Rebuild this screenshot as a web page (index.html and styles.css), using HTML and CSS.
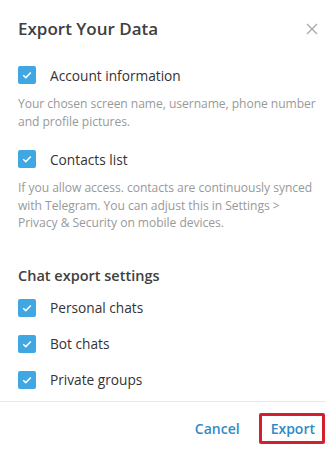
FILE: index.html
```html
<!DOCTYPE html>
<html>
<head>
<meta charset="utf-8">
<link rel="stylesheet" href="styles.css">
</head>
<body>
<div class="dialog">
  <div class="header">
    <div class="title">Export Your Data</div>
    <svg class="close" width="12" height="12" viewBox="0 0 12 12"><path d="M1 1L11 11M11 1L1 11" stroke="#a8a8a8" stroke-width="1.3" fill="none"/></svg>
  </div>
  <div class="content">
    <div class="option">
      <span class="check"><svg width="10" height="8" viewBox="0 0 10 8"><path d="M1.2 4.2L3.8 6.6L8.8 1.4" stroke="#fff" stroke-width="1.5" fill="none"/></svg></span>
      <span class="label">Account information</span>
    </div>
    <div class="desc">Your chosen screen name, username, phone number and profile pictures.</div>
    <div class="option">
      <span class="check"><svg width="10" height="8" viewBox="0 0 10 8"><path d="M1.2 4.2L3.8 6.6L8.8 1.4" stroke="#fff" stroke-width="1.5" fill="none"/></svg></span>
      <span class="label">Contacts list</span>
    </div>
    <div class="desc">If you allow access. contacts are continuously synced with Telegram. You can adjust this in Settings &gt; Privacy &amp; Security on mobile devices.</div>
    <div class="section">Chat export settings</div>
    <div class="option row">
      <span class="check"><svg width="10" height="8" viewBox="0 0 10 8"><path d="M1.2 4.2L3.8 6.6L8.8 1.4" stroke="#fff" stroke-width="1.5" fill="none"/></svg></span>
      <span class="label">Personal chats</span>
    </div>
    <div class="option row">
      <span class="check"><svg width="10" height="8" viewBox="0 0 10 8"><path d="M1.2 4.2L3.8 6.6L8.8 1.4" stroke="#fff" stroke-width="1.5" fill="none"/></svg></span>
      <span class="label">Bot chats</span>
    </div>
    <div class="option row">
      <span class="check"><svg width="10" height="8" viewBox="0 0 10 8"><path d="M1.2 4.2L3.8 6.6L8.8 1.4" stroke="#fff" stroke-width="1.5" fill="none"/></svg></span>
      <span class="label">Private groups</span>
    </div>
  </div>
  <div class="footer">
    <button class="btn">Cancel</button>
    <button class="btn export">Export</button>
  </div>
</div>
</body>
</html>
```
FILE: styles.css
```css
html, body {
  margin: 0;
  padding: 0;
  background: #fff;
}
.dialog {
  width: 326px;
  height: 450px;
  font-family: "Open Sans", "Noto Sans", sans-serif;
  color: #333;
  display: flex;
  flex-direction: column;
}
.header {
  display: flex;
  justify-content: space-between;
  align-items: center;
  padding: 17px 8px 0 18px;
  height: 24px;
}
.title {
  font-size: 17px;
  font-weight: 600;
  color: #404040;
  line-height: 24px;
}
.content {
  padding: 0 9px 0 18px;
  margin-top: 24px;
  flex: 1;
}
.option {
  display: flex;
  align-items: center;
  height: 20px;
}
.check {
  width: 18px;
  height: 18px;
  border-radius: 2px;
  background: #40a7e3;
  display: flex;
  align-items: center;
  justify-content: center;
  flex: none;
}
.label {
  margin-left: 14px;
  font-size: 13.7px;
  color: #333;
}
.desc {
  margin-top: 10px;
  margin-bottom: 19px;
  font-size: 12.1px;
  line-height: 17.5px;
  color: #999;
  letter-spacing: -0.05px;
}
.section {
  margin-top: 34px;
  font-size: 14.5px;
  font-weight: 600;
  color: #404040;
  height: 20px;
  line-height: 20px;
}
.option.row {
  margin-top: 16px;
}
.section + .option.row {
  margin-top: 12px;
}
.footer {
  border-top: 1px solid #e8e8e8;
  display: flex;
  justify-content: flex-end;
  align-items: center;
  gap: 9px;
  padding: 11px 1px 6px 0;
}
.btn {
  background: none;
  border: 3px solid transparent;
  border-radius: 2px;
  font-family: "Open Sans", "Noto Sans", sans-serif;
  font-size: 14px;
  font-weight: 600;
  color: #2e8bc9;
  padding: 2px 7px 2px 9px;
  height: 31px;
}
.btn.export {
  border-color: #d3202f;
}
```
